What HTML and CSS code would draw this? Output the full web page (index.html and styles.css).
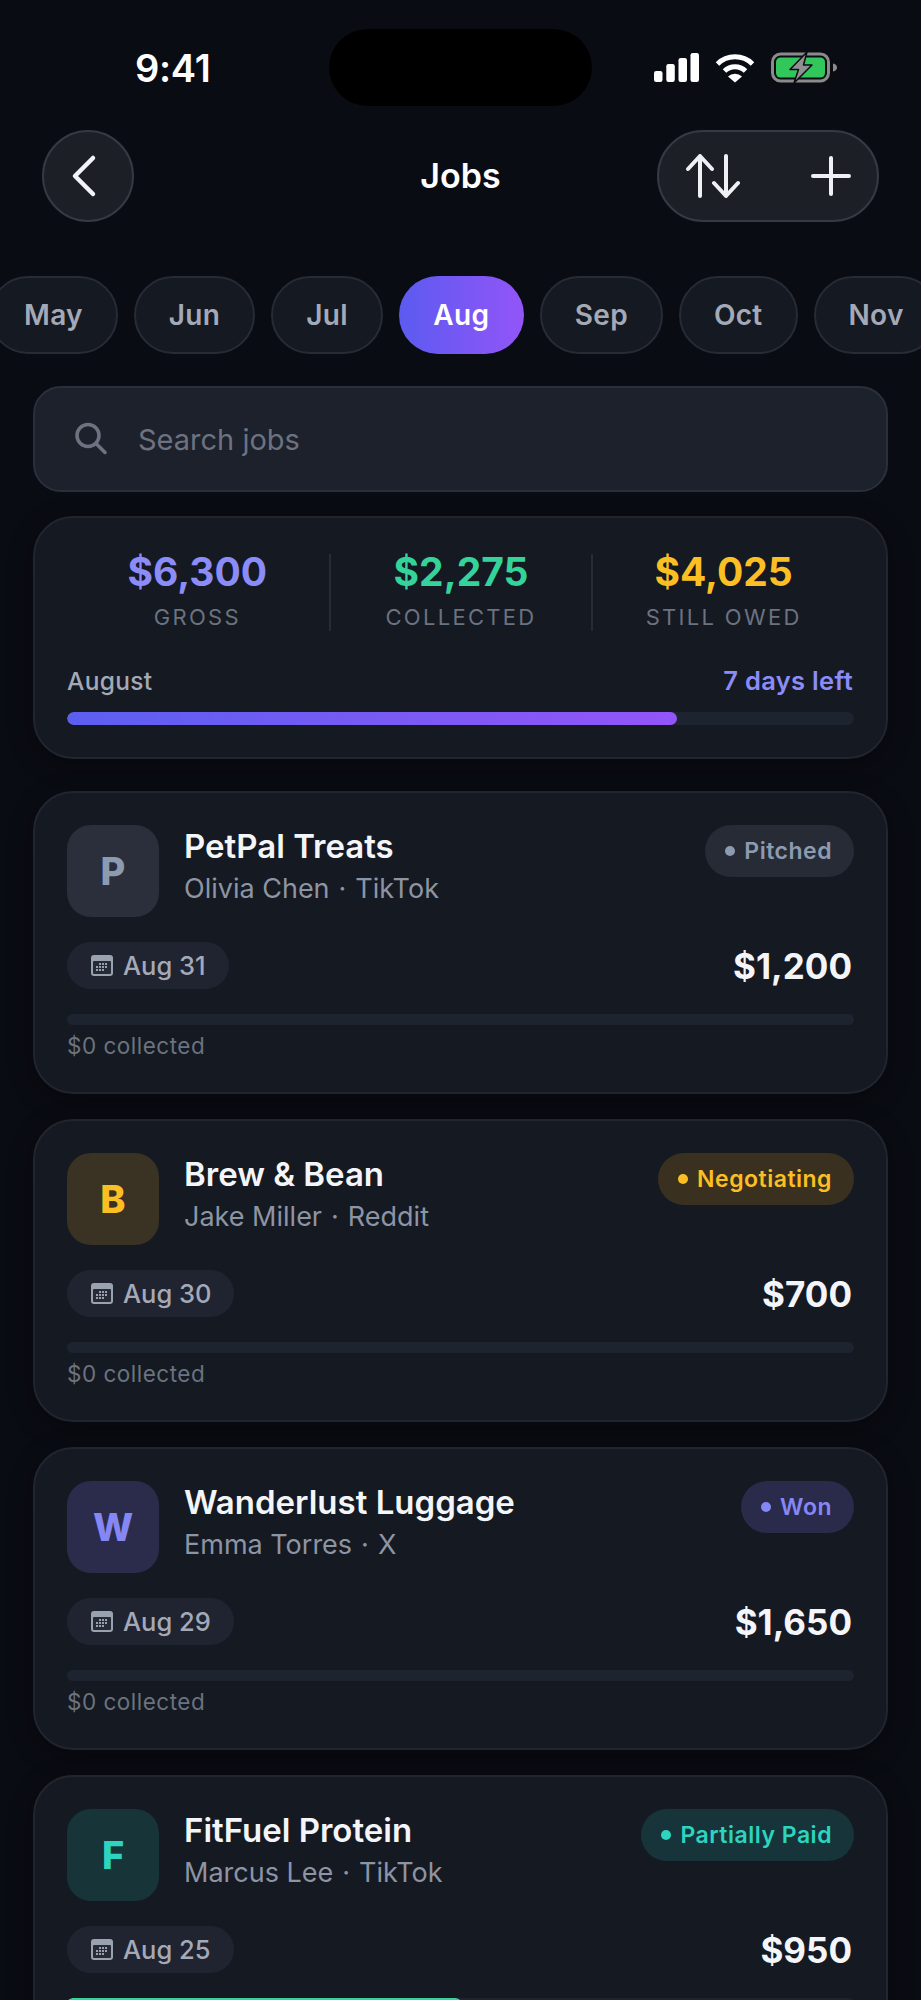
FILE: index.html
```html
<!DOCTYPE html>
<html lang="en">
<head>
<meta charset="utf-8">
<title>Jobs</title>
<link rel="stylesheet" href="styles.css">
</head>
<body>
<div class="screen">
  <div class="status">
    <div class="time">9:41</div>
    <div class="island"></div>
    <div class="sys">
      <svg width="45" height="30" viewBox="0 0 45 30"><rect x="0" y="18" width="8.5" height="11" rx="2.2" fill="#fff"/><rect x="12.3" y="11" width="8.5" height="18" rx="2.2" fill="#fff"/><rect x="24.5" y="5" width="8.5" height="24" rx="2.2" fill="#fff"/><rect x="36.5" y="0" width="8.5" height="29" rx="2.2" fill="#fff"/></svg>
      <svg width="40" height="30" viewBox="0 0 40 30"><path d="M2.5 11 A 25 25 0 0 1 37.5 11" fill="none" stroke="#fff" stroke-width="5"/><path d="M9.5 18 A 15 15 0 0 1 30.5 18" fill="none" stroke="#fff" stroke-width="5"/><path d="M20 29.5 L13 23.5 A 10 10 0 0 1 27 23.5 Z" fill="#fff"/></svg>
      <svg width="66" height="32" viewBox="0 0 66 32"><rect x="1.5" y="2" width="56" height="27" rx="8" fill="none" stroke="#8b8b8b" stroke-width="3"/><rect x="5" y="5.5" width="49" height="20" rx="4.5" fill="#31c75a"/><path d="M62 11.5 c2.6 .6 4 2 4 4 s-1.400 3.400-4 4 Z" fill="#8b8b8b"/><path d="M36 0 L19 17.500 H27.500 L23 31 L41 13 H32.500 Z" fill="#909090" stroke="#0b0d14" stroke-width="1.500" stroke-linejoin="round"/></svg>
    </div>
  </div>

  <header class="nav">
    <button class="back" type="button" aria-label="Back">
      <svg class="back-icon" width="28" height="44" viewBox="0 0 28 44"><path d="M22 4 L4 22 L22 40" fill="none" stroke="#f1f3f6" stroke-width="4.500" stroke-linecap="round" stroke-linejoin="round"/></svg>
    </button>
    <h1 class="title">Jobs</h1>
    <div class="actions">
      <svg width="54" height="46" viewBox="0 0 54 46"><path d="M14 43 V3 M2 16 L14 3 L26 16 M40 3 V43 M28 30 L40 43 L52 30" fill="none" stroke="#eef0f4" stroke-width="4" stroke-linecap="round" stroke-linejoin="round"/></svg>
      <svg width="40" height="40" viewBox="0 0 40 40"><path d="M20 2 V38 M2 20 H38" fill="none" stroke="#eef0f4" stroke-width="4" stroke-linecap="round"/></svg>
    </div>
  </header>

  <div class="months">
    <div class="track">
      <span class="month">May</span>
      <span class="month">Jun</span>
      <span class="month">Jul</span>
      <span class="month active">Aug</span>
      <span class="month">Sep</span>
      <span class="month">Oct</span>
      <span class="month">Nov</span>
    </div>
  </div>

  <main class="content">
    <div class="search">
      <svg width="34" height="34" viewBox="0 0 34 34"><circle cx="14" cy="13.500" r="11" fill="none" stroke="#6c7280" stroke-width="3.500"/><path d="M22.500 22 L31 30.500" fill="none" stroke="#6c7280" stroke-width="3.500" stroke-linecap="round"/></svg>
      <span class="placeholder">Search jobs</span>
    </div>

    <section class="summary">
      <div class="stats">
        <div class="stat"><div class="stat-value purple">$6,300</div><div class="stat-label">GROSS</div></div>
        <div class="stat"><div class="stat-value green">$2,275</div><div class="stat-label">COLLECTED</div></div>
        <div class="stat"><div class="stat-value amber">$4,025</div><div class="stat-label">STILL OWED</div></div>
      </div>
      <div class="period"><span class="period-name">August</span><span class="period-left">7 days left</span></div>
      <div class="bar-lg"><div class="bar-lg-fill" style="width:77.500%"></div></div>
    </section>

    <article class="card">
      <div class="card-top">
        <div class="avatar slate">P</div>
        <div class="info"><div class="name">PetPal Treats</div><div class="sub">Olivia Chen<span class="sep">·</span>TikTok</div></div>
        <div class="badge slate"><i class="dot"></i>Pitched</div>
      </div>
      <div class="card-mid">
        <div class="date"><svg class="cal" width="22" height="21" viewBox="0 0 22 21"><use href="#cal"/></svg>Aug 31</div>
        <div class="amount">$1,200</div>
      </div>
      <div class="bar"></div>
      <div class="collected">$0 collected</div>
    </article>

    <article class="card">
      <div class="card-top">
        <div class="avatar gold">B</div>
        <div class="info"><div class="name">Brew &amp; Bean</div><div class="sub">Jake Miller<span class="sep">·</span>Reddit</div></div>
        <div class="badge gold"><i class="dot"></i>Negotiating</div>
      </div>
      <div class="card-mid">
        <div class="date"><svg class="cal" width="22" height="21" viewBox="0 0 22 21"><use href="#cal"/></svg>Aug 30</div>
        <div class="amount">$700</div>
      </div>
      <div class="bar"></div>
      <div class="collected">$0 collected</div>
    </article>

    <article class="card">
      <div class="card-top">
        <div class="avatar indigo">W</div>
        <div class="info"><div class="name">Wanderlust Luggage</div><div class="sub">Emma Torres<span class="sep">·</span>X</div></div>
        <div class="badge indigo"><i class="dot"></i>Won</div>
      </div>
      <div class="card-mid">
        <div class="date"><svg class="cal" width="22" height="21" viewBox="0 0 22 21"><use href="#cal"/></svg>Aug 29</div>
        <div class="amount">$1,650</div>
      </div>
      <div class="bar"></div>
      <div class="collected">$0 collected</div>
    </article>

    <article class="card">
      <div class="card-top">
        <div class="avatar teal">F</div>
        <div class="info"><div class="name">FitFuel Protein</div><div class="sub">Marcus Lee<span class="sep">·</span>TikTok</div></div>
        <div class="badge teal"><i class="dot"></i>Partially Paid</div>
      </div>
      <div class="card-mid">
        <div class="date"><svg class="cal" width="22" height="21" viewBox="0 0 22 21"><use href="#cal"/></svg>Aug 25</div>
        <div class="amount">$950</div>
      </div>
      <div class="bar"><div class="bar-fill" style="width:50%"></div></div>
    </article>
  </main>

  <svg class="defs" width="0" height="0">
    <symbol id="cal" viewBox="0 0 22 21">
      <rect x="0" y="0" width="22" height="21" rx="3" fill="#9aa1af"/>
      <rect x="2" y="6" width="18" height="13" rx="1" fill="#262b36"/>
      <g fill="#9aa1af">
        <rect x="8" y="8" width="2" height="2"/><rect x="11" y="8" width="2" height="2"/><rect x="14" y="8" width="2" height="2"/>
        <rect x="5" y="11" width="2" height="2"/><rect x="8" y="11" width="2" height="2"/><rect x="11" y="11" width="2" height="2"/><rect x="14" y="11" width="2" height="2"/>
        <rect x="5" y="14" width="2" height="2"/><rect x="8" y="14" width="2" height="2"/><rect x="11" y="14" width="2" height="2"/>
      </g>
    </symbol>
  </svg>
</div>
</body>
</html>
```

FILE: styles.css
```css
* { box-sizing: border-box; }
html, body { margin: 0; padding: 0; background: #0a0c12; }
body { font-family: Inter, "Liberation Sans", sans-serif; color: #f3f5f8; }
.screen { width: 921px; height: 2000px; overflow: hidden; background: #0a0c13; padding-top: 29px; }
.defs { display: block; }

.status { display: grid; grid-template-columns: 329px 263px 329px; height: 77px; align-items: center; }
.time { font-size: 38px; font-weight: 600; padding-left: 135px; line-height: 1; letter-spacing: -0.3px; color: #fff; }
.island { height: 77px; background: #000; border-radius: 39px; }
.sys { display: flex; align-items: center; padding-left: 62px; gap: 16px; height: 32px; }

.nav { display: grid; grid-template-columns: 1fr auto 1fr; align-items: center; height: 92px; margin-top: 24px; padding: 0 42px; }
.back { width: 92px; height: 92px; border-radius: 50%; background: #1c1f25; border: 2px solid #343944; padding: 0; display: flex; align-items: center; justify-content: center; }
.back-icon { margin-right: 6px; }
.title { margin: 0; font-size: 34px; font-weight: 600; color: #fff; line-height: 1; }
.actions { justify-self: end; width: 222px; height: 92px; border-radius: 46px; background: #1c1f25; border: 2px solid #343944; display: flex; align-items: center; padding-left: 27px; gap: 71px; }

.months { margin-top: 54px; height: 78px; overflow: hidden; }
.track { display: flex; gap: 16px; margin-left: -11px; width: 1000px; }
.month { height: 78px; padding: 0 33px; border: 2px solid #262b35; border-radius: 39px; background: #151922; color: #a4a9b8; font-size: 28px; font-weight: 600; letter-spacing: .3px; display: flex; align-items: center; }
.month.active { background: linear-gradient(90deg, #5b5bf0, #9355f8); border: 0; padding: 0 34.500px; color: #fff; }

.content { padding: 0 33px; margin-top: 32px; }
.search { height: 106px; border-radius: 28px; background: #1c212c; border: 2px solid #2a2f3b; display: flex; align-items: center; padding-left: 39px; gap: 30px; }
.placeholder { font-size: 29px; color: #6d7280; padding-top: 1px; }

.summary { height: 243px; margin-top: 24px; border-radius: 40px; background: #151922; border: 2px solid #20252f; padding: 36px 32px 0; box-shadow: 0 6px 24px rgba(0,0,0,.35); }
.stats { display: grid; grid-template-columns: repeat(3, 1fr); height: 76px; margin-left: -1px; }
.stat { text-align: center; }
.stat + .stat { border-left: 2px solid #262b35; }
.stat-value { font-size: 39px; font-weight: 700; line-height: 36px; }
.purple { color: #8b8cf8; }
.green { color: #34d399; }
.amber { color: #fbbf24; }
.stat-label { font-size: 22px; line-height: 28px; margin-top: 13px; letter-spacing: 2.300px; color: #6b7280; }
.period { display: flex; justify-content: space-between; align-items: center; margin-top: 34px; padding-right: 1px; line-height: 34px; font-size: 24.500px; letter-spacing: .3px; }
.period-name { color: #a4a9b8; font-weight: 500; }
.period-left { color: #8b8cf8; font-weight: 600; font-size: 25.500px; }
.bar-lg { height: 13px; margin-top: 14px; border-radius: 7px; background: #1e2330; overflow: hidden; }
.bar-lg-fill { height: 100%; border-radius: 7px; background: linear-gradient(90deg, #5b5ff0, #9355f8); }

.card { height: 303px; margin-top: 25px; border-radius: 40px; background: #151922; border: 2px solid #20252f; padding: 32px 32px 0; box-shadow: 0 6px 24px rgba(0,0,0,.35); }
.summary + .card { margin-top: 32px; }
.card-top { display: flex; align-items: flex-start; height: 92px; }
.avatar { width: 92px; height: 92px; border-radius: 24px; display: flex; align-items: center; justify-content: center; font-size: 38px; font-weight: 800; flex: none; }
.avatar.slate { background: #2a2f3b; color: #8d9bb0; }
.avatar.gold { background: #3a3222; color: #fbbf24; }
.avatar.indigo { background: #2b2c4c; color: #8587f5; }
.avatar.teal { background: #173538; color: #2dd4bf; }
.info { margin-left: 25px; flex: 1; padding-top: 4px; }
.name { font-size: 33px; font-weight: 600; line-height: 40px; color: #f3f5f8; margin-top: -3px; }
.sub { font-size: 27px; line-height: 34px; margin-top: 6px; color: #8d94a3; }
.sep { margin: 0 9px; }
.badge { height: 52px; border-radius: 26px; display: flex; align-items: center; padding: 0 22px 0 20px; gap: 9px; font-size: 23px; font-weight: 600; letter-spacing: .5px; flex: none; }
.dot { width: 10px; height: 10px; border-radius: 50%; background: currentColor; }
.badge.slate { background: #262b36; color: #8d9bb0; }
.badge.gold { background: #3a3020; color: #fbbf24; }
.badge.indigo { background: #2a2b4a; color: #8587f5; }
.badge.teal { background: #17343a; color: #2dd4bf; }

.card-mid { display: flex; justify-content: space-between; align-items: center; margin-top: 25px; height: 47px; }
.date { height: 47px; border-radius: 24px; background: #1f2430; display: flex; align-items: center; padding: 0 23px 0 24px; gap: 10px; font-size: 25.500px; font-weight: 500; color: #a4a9b8; }
.amount { font-size: 35px; font-weight: 700; color: #f3f5f8; padding-right: 2px; }
.bar { height: 11px; margin-top: 25px; border-radius: 6px; background: #1e2330; overflow: hidden; }
.bar-fill { height: 100%; background: #34d399; border-radius: 6px; }
.collected { margin-top: 6px; font-size: 22.500px; line-height: 30px; letter-spacing: .5px; color: #6b7280; }
```
